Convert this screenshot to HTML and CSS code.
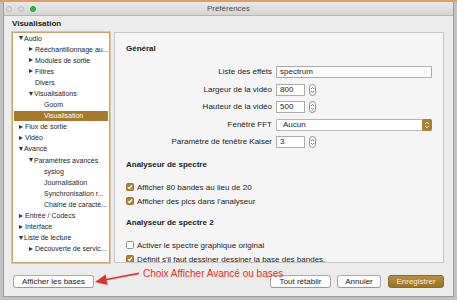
FILE: index.html
```html
<!DOCTYPE html>
<html lang="fr">
<head>
    <meta charset="UTF-8">
    <title>Préférences</title>
    <link rel="stylesheet" href="styles.css">
</head>
<body>
<div class="window">
    <div class="titlebar">
        <div class="lights">
            <span class="light"></span>
            <span class="light"></span>
            <span class="light green"></span>
        </div>
        <div class="title">Préférences</div>
    </div>
    <div class="content">
        <div class="section-title">Visualisation</div>
        <div class="main">
            <ul class="tree">
                <li class="l0"><span class="open"></span>Audio</li>
                <li class="l1"><span class="closed"></span>Rééchantillonnage au...</li>
                <li class="l1"><span class="closed"></span>Modules de sortie</li>
                <li class="l1"><span class="closed"></span>Filtres</li>
                <li class="l1"><span class="none"></span>Divers</li>
                <li class="l1"><span class="open"></span>Visualisations</li>
                <li class="l2">Goom</li>
                <li class="l2 selected">Visualisation</li>
                <li class="l0"><span class="closed"></span>Flux de sortie</li>
                <li class="l0"><span class="closed"></span>Vidéo</li>
                <li class="l0"><span class="open"></span>Avancé</li>
                <li class="l1"><span class="open"></span>Paramètres avancés</li>
                <li class="l2">syslog</li>
                <li class="l2">Journalisation</li>
                <li class="l2">Synchronisation r...</li>
                <li class="l2">Chaîne de caractè...</li>
                <li class="l0"><span class="closed"></span>Entrée / Codecs</li>
                <li class="l0"><span class="closed"></span>Interface</li>
                <li class="l0"><span class="open"></span>Liste de lecture</li>
                <li class="l1"><span class="closed"></span>Découverte de servic...</li>
            </ul>
            <div class="panel">
                <h3>Général</h3>
                <div class="form">
                    <label>Liste des effets</label>
                    <div class="field"><div class="input wide">spectrum</div></div>

                    <label>Largeur de la vidéo</label>
                    <div class="field">
                        <div class="input small">800</div>
                        <svg class="stepper" width="7" height="12" viewBox="0 0 7 12"><rect x="0.5" y="0.5" width="6" height="11" rx="3" fill="#fff" stroke="#8c8c8c"/><path d="M2 5 L3.5 3.5 L5 5 M2 7 L3.5 8.5 L5 7" fill="none" stroke="#555" stroke-width="0.8"/></svg>
                    </div>

                    <label>Hauteur de la vidéo</label>
                    <div class="field">
                        <div class="input small">500</div>
                        <svg class="stepper" width="7" height="12" viewBox="0 0 7 12"><rect x="0.5" y="0.5" width="6" height="11" rx="3" fill="#fff" stroke="#8c8c8c"/><path d="M2 5 L3.5 3.5 L5 5 M2 7 L3.5 8.5 L5 7" fill="none" stroke="#555" stroke-width="0.8"/></svg>
                    </div>

                    <label>Fenêtre FFT</label>
                    <div class="field">
                        <div class="select">
                            <span>Aucun</span>
                            <svg class="select-btn" width="10" height="12" viewBox="0 0 10 12"><rect width="10" height="12" rx="2" fill="#a8822f"/><path d="M3.3 5 L5 3.3 L6.7 5 M3.3 7 L5 8.7 L6.7 7" fill="none" stroke="#fff" stroke-width="0.9"/></svg>
                        </div>
                    </div>

                    <label>Paramètre de fenêtre Kaiser</label>
                    <div class="field">
                        <div class="input small">3</div>
                        <svg class="stepper" width="7" height="12" viewBox="0 0 7 12"><rect x="0.5" y="0.5" width="6" height="11" rx="3" fill="#fff" stroke="#8c8c8c"/><path d="M2 5 L3.5 3.5 L5 5 M2 7 L3.5 8.5 L5 7" fill="none" stroke="#555" stroke-width="0.8"/></svg>
                    </div>
                </div>

                <h3>Analyseur de spectre</h3>
                <div class="checks">
                    <div class="check"><span class="box on"></span>Afficher 80 bandes au lieu de 20</div>
                    <div class="check"><span class="box on"></span>Afficher des pics dans l'analyseur</div>
                </div>

                <h3>Analyseur de spectre 2</h3>
                <div class="checks">
                    <div class="check"><span class="box"></span>Activer le spectre graphique original</div>
                    <div class="check"><span class="box on"></span>Définit s'il faut dessiner dessiner la base des bandes.</div>
                </div>
            </div>
        </div>
        <div class="footer">
            <button class="btn bases">Afficher les bases</button>
            <div class="actions">
                <button class="btn reset">Tout rétablir</button>
                <button class="btn cancel">Annuler</button>
                <button class="btn save">Enregistrer</button>
            </div>
        </div>
    </div>
</div>

<!-- annotation -->
<div class="note">Choix Afficher Avancé ou bases</div>
<svg class="arrow" width="457" height="300" viewBox="0 0 457 300">
    <line x1="139" y1="273.4" x2="104" y2="280" stroke="#e2312b" stroke-width="1.6"/>
    <polygon points="95,282 105.6,274.6 107.6,285" fill="#e2312b"/>
</svg>
</body>
</html>
```

FILE: styles.css
```css
*{
    margin: 0;
    padding: 0;
    box-sizing: border-box;
}
body{
    position: relative;
    width: 457px;
    height: 300px;
    overflow: hidden;
    background: #c2c2c2;
    border-top: 2px solid #e49c60;
    font-family: "Liberation Sans", Arial, sans-serif;
    font-size: 8px;
    color: #222222;
}
li{
    list-style: none;
}
.window{
    display: flex;
    flex-direction: column;
    height: 295px;
    margin: 0 3px;
    background: #ececec;
    border: 1px solid #9c9c9c;
    border-top: none;
}
.titlebar{
    display: grid;
    grid-template-columns: 1fr auto 1fr;
    align-items: center;
    height: 14px;
    background: linear-gradient(#e9e9e9, #d4d4d4);
    border-bottom: 1px solid #b4b4b4;
}
.lights{
    display: flex;
    gap: 6px;
    padding-left: 2px;
}
.light{
    width: 6px;
    height: 6px;
    border-radius: 50%;
    background: #dcdcdc;
    border: 1px solid #b9b9b9;
}
.light.green{
    background: #29c13c;
    border-color: #1fa22f;
}
.title{
    color: #4a4a4a;
    line-height: 10px;
}
.content{
    flex: 1;
    display: flex;
    flex-direction: column;
    padding: 3px 9px 0 8px;
}
.section-title{
    font-weight: bold;
    line-height: 10px;
}
.main{
    display: flex;
    gap: 4px;
    height: 231px;
    margin-top: 3px;
}
.tree{
    width: 98px;
    padding-top: 0.5px;
    background: #ffffff;
    border: 1px solid #c5a46f;
    box-shadow: 0 0 0 1px #dcc49b;
    overflow: hidden;
    font-size: 7px;
}
.tree li{
    height: 10px;
    line-height: 10px;
    margin: 0 1px 1.1px;
    white-space: nowrap;
    overflow: hidden;
    color: #262626;
}
.tree .l0{
    padding-left: 5px;
}
.tree .l1{
    padding-left: 15px;
}
.tree .l2{
    padding-left: 30px;
}
.tree .selected{
    background: #a8792c;
    color: #ffffff;
}
.tree span{
    display: inline-block;
    vertical-align: middle;
    margin-top: -1px;
}
.tree .closed{
    width: 0;
    height: 0;
    border-left: 4px solid #333333;
    border-top: 2.5px solid transparent;
    border-bottom: 2.5px solid transparent;
    margin-right: 2px;
}
.tree .open{
    width: 0;
    height: 0;
    border-top: 4px solid #333333;
    border-left: 2.5px solid transparent;
    border-right: 2.5px solid transparent;
    margin-right: 1px;
}
.tree .none{
    width: 6px;
}
.panel{
    flex: 1;
    background: #f5f5f5;
    border: 1px solid #c7c7c7;
    padding: 0 11px;
    overflow: hidden;
}
.panel h3{
    font-size: 8px;
    font-weight: bold;
    line-height: 10px;
    margin: 12px 0;
}
.panel h3:first-child{
    margin-top: 11px;
}
.form{
    display: grid;
    grid-template-columns: 146px 1fr;
    column-gap: 4px;
    row-gap: 5.5px;
}
.form label{
    text-align: right;
    line-height: 12px;
}
.field{
    display: flex;
    align-items: center;
    gap: 4px;
    height: 12px;
}
.input{
    height: 12px;
    line-height: 10px;
    padding-left: 3px;
    background: #ffffff;
    border: 1px solid #acacac;
}
.input.wide{
    width: 156px;
}
.input.small{
    width: 29px;
}
.select{
    display: flex;
    align-items: center;
    justify-content: space-between;
    width: 156px;
    height: 12px;
    padding-left: 6px;
    background: #ffffff;
    border: 1px solid #b6b6b6;
    border-right: none;
    border-radius: 2px;
}
.checks{
    display: flex;
    flex-direction: column;
    gap: 4px;
}
.check{
    display: flex;
    align-items: center;
    gap: 3px;
    height: 10px;
    white-space: nowrap;
}
.box{
    width: 8px;
    height: 8px;
    border: 1px solid #8e8e8e;
    border-radius: 1.5px;
    background: #ffffff;
}
.box.on{
    border-color: #9c7530;
    background: #ad8639 url("data:image/svg+xml;utf8,<svg xmlns='http://www.w3.org/2000/svg' width='6' height='6' viewBox='0 0 6 6'><path d='M1 3.1 L2.4 4.5 L5 1.5' fill='none' stroke='white' stroke-width='1.2'/></svg>") center no-repeat;
}
.footer{
    display: flex;
    justify-content: space-between;
    align-items: center;
    margin-top: 12px;
}
.btn{
    height: 13px;
    font-family: "Liberation Sans", Arial, sans-serif;
    font-size: 8px;
    color: #222222;
    background: #ffffff;
    border: 1px solid #aaaaaa;
    border-bottom-color: #999999;
    border-radius: 3px;
}
.bases{
    width: 81px;
    margin-left: 1px;
}
.actions{
    display: flex;
    gap: 6px;
}
.reset{
    width: 61px;
}
.cancel{
    width: 44px;
}
.save{
    width: 56px;
    margin-left: 1px;
    color: #f6ecd8;
    background: linear-gradient(#b8903f, #9b7327);
    border-color: #8d6a25;
}
.note{
    position: absolute;
    left: 143px;
    top: 266px;
    font-size: 10px;
    line-height: 12px;
    color: #e2312b;
    white-space: nowrap;
}
.arrow{
    position: absolute;
    left: 0;
    top: -2px;
}
```
